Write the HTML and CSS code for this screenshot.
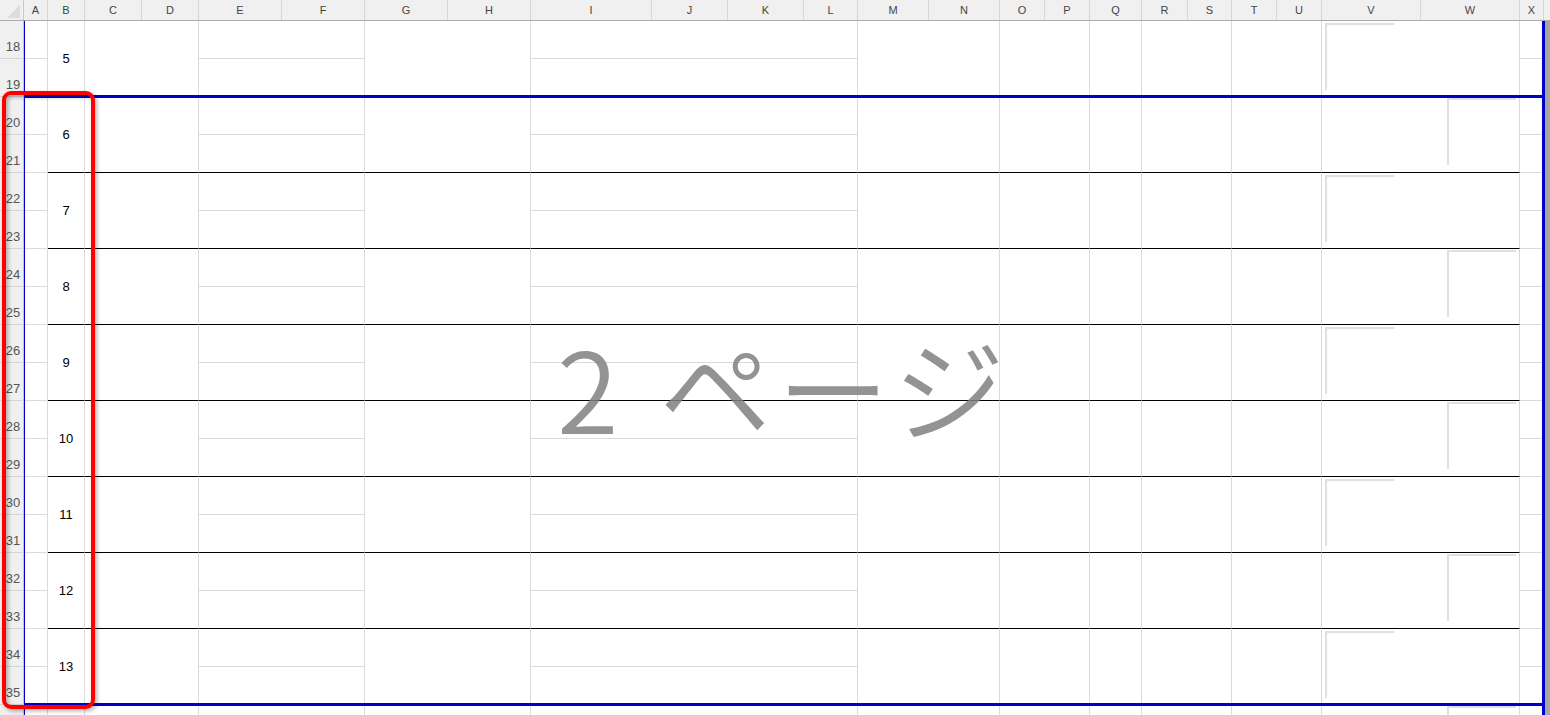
FILE: index.html
```html
<!DOCTYPE html>
<html lang="ja">
<head>
    <meta charset="UTF-8">
    <title>改ページプレビュー</title>
    <link rel="stylesheet" href="styles.css">
</head>
<body>

    <div class="sheet">
        <!-- 列見出し -->
        <div class="col-head">
            <div class="corner">
                <svg width="24" height="20" viewBox="0 0 24 20"><polygon points="20,5 20,18 7,18" fill="#dcdcdc"/></svg>
            </div>
            <div class="ch">A</div><div class="ch">B</div><div class="ch">C</div><div class="ch">D</div>
            <div class="ch">E</div><div class="ch">F</div><div class="ch">G</div><div class="ch">H</div>
            <div class="ch">I</div><div class="ch">J</div><div class="ch">K</div><div class="ch">L</div>
            <div class="ch">M</div><div class="ch">N</div><div class="ch">O</div><div class="ch">P</div>
            <div class="ch">Q</div><div class="ch">R</div><div class="ch">S</div><div class="ch">T</div>
            <div class="ch">U</div><div class="ch">V</div><div class="ch">W</div><div class="ch">X</div>
            <div class="ch last"></div>
        </div>

        <!-- 2行で1件 -->
        <div class="pair">
            <div class="rh rh1">18</div><div class="rh rh2">19</div>
            <div class="c a1"></div><div class="c a2"></div>
            <div class="c b num">5</div>
            <div class="c cd"></div>
            <div class="c ef1"></div><div class="c ef2"></div>
            <div class="c gh"></div>
            <div class="c il1"></div><div class="c il2"></div>
            <div class="c mn"></div><div class="c op"></div><div class="c q"></div>
            <div class="c rs"></div><div class="c tu"></div>
            <div class="c vw"><div class="shape in-v"></div></div>
            <div class="c x1"></div><div class="c x2"></div>
            <div class="off"></div>
        </div>

        <div class="pair">
            <div class="rh rh1">20</div><div class="rh rh2">21</div>
            <div class="c a1"></div><div class="c a2"></div>
            <div class="c b num">6</div>
            <div class="c cd"></div>
            <div class="c ef1"></div><div class="c ef2"></div>
            <div class="c gh"></div>
            <div class="c il1"></div><div class="c il2"></div>
            <div class="c mn"></div><div class="c op"></div><div class="c q"></div>
            <div class="c rs"></div><div class="c tu"></div>
            <div class="c vw"><div class="shape in-w"></div></div>
            <div class="c x1"></div><div class="c x2"></div>
            <div class="off"></div>
        </div>

        <div class="pair">
            <div class="rh rh1">22</div><div class="rh rh2">23</div>
            <div class="c a1"></div><div class="c a2"></div>
            <div class="c b num">7</div>
            <div class="c cd"></div>
            <div class="c ef1"></div><div class="c ef2"></div>
            <div class="c gh"></div>
            <div class="c il1"></div><div class="c il2"></div>
            <div class="c mn"></div><div class="c op"></div><div class="c q"></div>
            <div class="c rs"></div><div class="c tu"></div>
            <div class="c vw"><div class="shape in-v"></div></div>
            <div class="c x1"></div><div class="c x2"></div>
            <div class="off"></div>
        </div>

        <div class="pair">
            <div class="rh rh1">24</div><div class="rh rh2">25</div>
            <div class="c a1"></div><div class="c a2"></div>
            <div class="c b num">8</div>
            <div class="c cd"></div>
            <div class="c ef1"></div><div class="c ef2"></div>
            <div class="c gh"></div>
            <div class="c il1"></div><div class="c il2"></div>
            <div class="c mn"></div><div class="c op"></div><div class="c q"></div>
            <div class="c rs"></div><div class="c tu"></div>
            <div class="c vw"><div class="shape in-w"></div></div>
            <div class="c x1"></div><div class="c x2"></div>
            <div class="off"></div>
        </div>

        <div class="pair">
            <div class="rh rh1">26</div><div class="rh rh2">27</div>
            <div class="c a1"></div><div class="c a2"></div>
            <div class="c b num">9</div>
            <div class="c cd"></div>
            <div class="c ef1"></div><div class="c ef2"></div>
            <div class="c gh"></div>
            <div class="c il1"></div><div class="c il2"></div>
            <div class="c mn"></div><div class="c op"></div><div class="c q"></div>
            <div class="c rs"></div><div class="c tu"></div>
            <div class="c vw"><div class="shape in-v"></div></div>
            <div class="c x1"></div><div class="c x2"></div>
            <div class="off"></div>
        </div>

        <div class="pair">
            <div class="rh rh1">28</div><div class="rh rh2">29</div>
            <div class="c a1"></div><div class="c a2"></div>
            <div class="c b num">10</div>
            <div class="c cd"></div>
            <div class="c ef1"></div><div class="c ef2"></div>
            <div class="c gh"></div>
            <div class="c il1"></div><div class="c il2"></div>
            <div class="c mn"></div><div class="c op"></div><div class="c q"></div>
            <div class="c rs"></div><div class="c tu"></div>
            <div class="c vw"><div class="shape in-w"></div></div>
            <div class="c x1"></div><div class="c x2"></div>
            <div class="off"></div>
        </div>

        <div class="pair">
            <div class="rh rh1">30</div><div class="rh rh2">31</div>
            <div class="c a1"></div><div class="c a2"></div>
            <div class="c b num">11</div>
            <div class="c cd"></div>
            <div class="c ef1"></div><div class="c ef2"></div>
            <div class="c gh"></div>
            <div class="c il1"></div><div class="c il2"></div>
            <div class="c mn"></div><div class="c op"></div><div class="c q"></div>
            <div class="c rs"></div><div class="c tu"></div>
            <div class="c vw"><div class="shape in-v"></div></div>
            <div class="c x1"></div><div class="c x2"></div>
            <div class="off"></div>
        </div>

        <div class="pair">
            <div class="rh rh1">32</div><div class="rh rh2">33</div>
            <div class="c a1"></div><div class="c a2"></div>
            <div class="c b num">12</div>
            <div class="c cd"></div>
            <div class="c ef1"></div><div class="c ef2"></div>
            <div class="c gh"></div>
            <div class="c il1"></div><div class="c il2"></div>
            <div class="c mn"></div><div class="c op"></div><div class="c q"></div>
            <div class="c rs"></div><div class="c tu"></div>
            <div class="c vw"><div class="shape in-w"></div></div>
            <div class="c x1"></div><div class="c x2"></div>
            <div class="off"></div>
        </div>

        <div class="pair">
            <div class="rh rh1">34</div><div class="rh rh2">35</div>
            <div class="c a1"></div><div class="c a2"></div>
            <div class="c b num">13</div>
            <div class="c cd"></div>
            <div class="c ef1"></div><div class="c ef2"></div>
            <div class="c gh"></div>
            <div class="c il1"></div><div class="c il2"></div>
            <div class="c mn"></div><div class="c op"></div><div class="c q"></div>
            <div class="c rs"></div><div class="c tu"></div>
            <div class="c vw"><div class="shape in-v"></div></div>
            <div class="c x1"></div><div class="c x2"></div>
            <div class="off"></div>
        </div>

        <!-- 画面の下端で切れている行 -->
        <div class="pair">
            <div class="rh rh1"></div><div class="rh rh2"></div>
            <div class="c a1"></div><div class="c a2"></div>
            <div class="c b"></div>
            <div class="c cd"></div>
            <div class="c ef1"></div><div class="c ef2"></div>
            <div class="c gh"></div>
            <div class="c il1"></div><div class="c il2"></div>
            <div class="c mn"></div><div class="c op"></div><div class="c q"></div>
            <div class="c rs"></div><div class="c tu"></div>
            <div class="c vw"><div class="shape in-w"></div></div>
            <div class="c x1"></div><div class="c x2"></div>
            <div class="off"></div>
        </div>
    </div>

    <!-- 改ページ線 -->
    <div class="break-h top-break"></div>
    <div class="break-h bottom-break"></div>
    <div class="edge-left"></div>
    <div class="edge-right"></div>

    <!-- ページ番号の透かし -->
    <div class="page-mark">2 ページ</div>

    <!-- 赤枠 -->
    <div class="red-frame"></div>

</body>
</html>
```

FILE: styles.css
```css
body {
    margin: 0;
    width: 1550px;
    height: 715px;
    overflow: hidden;
    position: relative;
    background: #fff;
    font-family: "Liberation Sans", Arial, sans-serif;
}

.sheet {
    --cols: 24px 24px 37px 57px 57px 83px 83px 83px 83px 121px 76px 76px 54px 71px 71px 45px 45px 52px 46px 44px 45px 45px 99px 99px 24px 1fr;
}

/* 列見出し */
.col-head {
    display: grid;
    grid-template-columns: var(--cols);
    height: 20px;
    background: #f0f0f0;
    border-bottom: 1px solid #ababab;
}
.corner {
    border-right: 1px solid #c8c8c8;
}
.corner svg {
    display: block;
}
.ch {
    border-right: 1px solid #d6d6d6;
    font-size: 11px;
    line-height: 20px;
    text-align: center;
    color: #444;
}
.ch.last {
    border-right: none;
}

/* 行 */
.pair {
    display: grid;
    grid-template-columns: var(--cols);
    grid-template-rows: 38px 38px;
}
.rh {
    grid-column: 1;
    background: #f0f0f0;
    border-right: 1px solid #c3c3c3;
    border-bottom: 1px solid #d6d6d6;
    display: flex;
    align-items: flex-end;
    justify-content: center;
    padding: 0 0 4px 3px;
    box-sizing: border-box;
    font-size: 13px;
    color: #555;
}
.rh1 { grid-row: 1; }
.rh2 { grid-row: 2; }

.c {
    border-right: 1px solid #dadada;
    border-bottom: 1px solid #dadada;
    position: relative;
}
.a1 { grid-column: 2; grid-row: 1; }
.a2 { grid-column: 2; grid-row: 2; }
.b { grid-column: 3; grid-row: 1 / 3; }
.cd { grid-column: 4 / 6; grid-row: 1 / 3; }
.ef1 { grid-column: 6 / 8; grid-row: 1; }
.ef2 { grid-column: 6 / 8; grid-row: 2; }
.gh { grid-column: 8 / 10; grid-row: 1 / 3; }
.il1 { grid-column: 10 / 14; grid-row: 1; }
.il2 { grid-column: 10 / 14; grid-row: 2; }
.mn { grid-column: 14 / 16; grid-row: 1 / 3; }
.op { grid-column: 16 / 18; grid-row: 1 / 3; }
.q { grid-column: 18; grid-row: 1 / 3; }
.rs { grid-column: 19 / 21; grid-row: 1 / 3; }
.tu { grid-column: 21 / 23; grid-row: 1 / 3; }
.vw { grid-column: 23 / 25; grid-row: 1 / 3; }
.x1 { grid-column: 25; grid-row: 1; }
.x2 { grid-column: 25; grid-row: 2; }
.off { grid-column: 26; grid-row: 1 / 3; background: #a6a6a6; }

/* 1件ごとの罫線 */
.b, .cd, .ef2, .gh, .il2, .mn, .op, .q, .rs, .tu, .vw {
    border-bottom-color: #000;
}

.num {
    display: flex;
    align-items: center;
    justify-content: center;
    font-size: 13px;
    color: #000;
}

/* V・W列の図形（上と左の線だけ見えている） */
.shape {
    position: absolute;
    top: 1px;
    height: 65px;
    width: 67px;
    border-top: 2px solid #e0e0e0;
    border-left: 2px solid #e0e0e0;
}
.shape.in-v {
    left: 3px;
    top: 2px;
}
.shape.in-w {
    left: 125px;
}

/* 改ページプレビューの青線 */
.break-h {
    position: absolute;
    left: 24px;
    width: 1521px;
    height: 3px;
    background: #0000cd;
}
.top-break { top: 95px; }
.bottom-break { top: 703px; }
.edge-left {
    position: absolute;
    left: 24px;
    top: 21px;
    bottom: 0;
    width: 1px;
    background: #0000cd;
}
.edge-right {
    position: absolute;
    left: 1542px;
    top: 21px;
    bottom: 0;
    width: 3px;
    background: #0000cd;
}

.page-mark {
    position: absolute;
    left: 24px;
    top: 97px;
    width: 1520px;
    height: 606px;
    padding-bottom: 30px;
    box-sizing: border-box;
    display: flex;
    align-items: center;
    justify-content: center;
    font-family: "Noto Sans CJK JP", sans-serif;
    font-weight: 350;
    font-size: 112px;
    letter-spacing: 6px;
    word-spacing: 4px;
    color: rgba(128, 128, 128, 0.85);
    pointer-events: none;
}

.red-frame {
    position: absolute;
    left: 2px;
    top: 91px;
    width: 85px;
    height: 610px;
    border: 4px solid #ff0000;
    border-radius: 9px;
    box-shadow: 2px 2px 4px rgba(0, 0, 0, 0.3), inset 2px 2px 4px rgba(0, 0, 0, 0.3);
}
```
